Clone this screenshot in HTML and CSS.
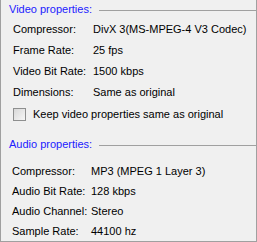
FILE: index.html
```html
<!DOCTYPE html>
<html>
<head>
<meta charset="utf-8">
<link rel="stylesheet" href="styles.css">
</head>
<body>
<div class="panel">
  <div class="head"><span class="head-label">Video properties:</span><span class="head-line"></span></div>
  <div class="rows video">
    <div class="row"><span class="key">Compressor:</span><span class="val">DivX 3(MS-MPEG-4 V3 Codec)</span></div>
    <div class="row"><span class="key">Frame Rate:</span><span class="val">25 fps</span></div>
    <div class="row"><span class="key">Video Bit Rate:</span><span class="val">1500 kbps</span></div>
    <div class="row"><span class="key">Dimensions:</span><span class="val">Same as original</span></div>
  </div>
  <label class="check"><span class="box"></span><span>Keep video properties same as original</span></label>
  <div class="head audio-head"><span class="head-label">Audio properties:</span><span class="head-line"></span></div>
  <div class="rows audio">
    <div class="row"><span class="key">Compressor:</span><span class="val">MP3 (MPEG 1 Layer 3)</span></div>
    <div class="row"><span class="key">Audio Bit Rate:</span><span class="val">128 kbps</span></div>
    <div class="row"><span class="key">Audio Channel:</span><span class="val">Stereo</span></div>
    <div class="row"><span class="key">Sample Rate:</span><span class="val">44100 hz</span></div>
  </div>
</div>
</body>
</html>
```
FILE: styles.css
```css
html, body {
  margin: 0;
  padding: 0;
  background: #f0f0f0;
}
.panel {
  width: 257px;
  height: 242px;
  box-sizing: border-box;
  border: 1px solid #a0a0a0;
  border-top: none;
  background: #f0f0f0;
  font-family: "Liberation Sans", Arial, sans-serif;
  font-size: 11px;
  color: #000;
  overflow: hidden;
}
.head {
  display: flex;
  align-items: center;
  height: 18px;
  padding-left: 8px;
}
.head-label {
  color: #2020ff;
  line-height: 18px;
}
.head-line {
  flex: 1;
  height: 1px;
  background: #a0a0a0;
  margin-left: 7px;
  margin-top: 2px;
}
.rows .row {
  display: flex;
  align-items: center;
}
.video .row {
  height: 21px;
  padding-left: 12px;
}
.video .key {
  width: 80px;
}
.audio-head {
  margin-top: 9px;
}
.audio .head-line {
  margin-left: 8px;
}
.audio {
  margin-top: 8px;
}
.audio .row {
  height: 20px;
  padding-left: 11px;
}
.audio .key {
  width: 79px;
}
.check {
  display: flex;
  align-items: center;
  height: 24px;
  padding-left: 12px;
}
.box {
  width: 11px;
  height: 11px;
  border: 1px solid #8e8f8f;
  background: linear-gradient(135deg, #d8d8d8, #f6f6f6);
  margin-right: 7px;
}
```
